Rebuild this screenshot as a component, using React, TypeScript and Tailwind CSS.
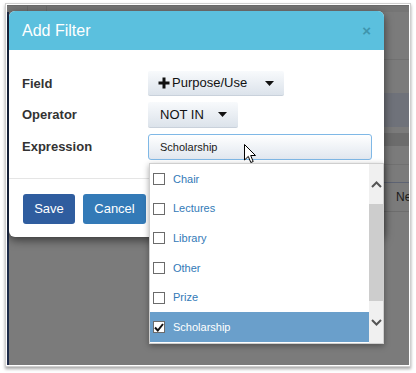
import React from "react";

const options = [
    { label: "Chair", checked: false },
    { label: "Lectures", checked: false },
    { label: "Library", checked: false },
    { label: "Other", checked: false },
    { label: "Prize", checked: false },
    { label: "Scholarship", checked: true },
];

function Caret() {
    return (
        <svg width="9" height="5" viewBox="0 0 9 5" className="shrink-0">
            <path d="M0 0 H9 L4.5 5 Z" fill="#111" />
        </svg>
    );
}

function Plus() {
    return (
        <svg width="12" height="12" viewBox="0 0 12 12" className="shrink-0 mr-[2px]">
            <path d="M6 0.5 V11.5 M0.5 6 H11.5" stroke="#111" strokeWidth="3" />
        </svg>
    );
}

function Chevron({ up }: { up?: boolean }) {
    return (
        <svg width="11" height="7" viewBox="0 0 11 7">
            <path
                d={up ? "M1 6 L5.5 1.5 L10 6" : "M1 1 L5.5 5.5 L10 1"}
                fill="none"
                stroke="#555"
                strokeWidth="2"
            />
        </svg>
    );
}

function Cursor() {
    return (
        <svg width="13" height="20" viewBox="0 0 13 20" className="absolute left-[237px] top-[139px]">
            <path
                d="M0.5 0.5 L0.5 16 L4.3 12.4 L6.8 18.5 L9.2 17.5 L6.7 11.5 L11.5 11.5 Z"
                fill="#fff"
                stroke="#000"
                strokeWidth="1"
                strokeLinejoin="round"
            />
        </svg>
    );
}

function Checkbox({ checked }: { checked: boolean }) {
    return (
        <span className="w-[12px] h-[12px] border border-[#6b6b6b] bg-white flex items-center justify-center shrink-0">
            {checked && (
                <svg width="10" height="9" viewBox="0 0 10 9">
                    <path d="M1 4.5 L3.8 7.5 L9 1" fill="none" stroke="#111" strokeWidth="2" />
                </svg>
            )}
        </span>
    );
}

export default function App() {
    return (
        <div className="w-[416px] h-[373px] bg-white pt-[3px] pl-[5px]" style={{ fontFamily: '"Liberation Sans", Arial, sans-serif' }}>
            <div className="w-[406px] h-[364px] border border-[#cfcfcf] p-[1px] shadow-[0_2px_3px_rgba(0,0,0,0.35)]">
                <div className="relative w-[402px] h-[360px] bg-[#7b7b7b] overflow-hidden">
                    {/* page behind the overlay */}
                    <div className="flex flex-col h-full">
                        <div className="h-[7px] bg-[#757575] border-t border-[#6a6a6a] flex">
                            <div className="w-[21px] border-r border-[#6a6a6a]" />
                            <div className="w-[19px] border-r border-[#6a6a6a]" />
                        </div>
                        <div className="flex-1 flex flex-col border-l-2 border-[#1d2b48]">
                            <div className="h-[48px] border-b border-[#717171]" />
                            <div className="h-[33px]" />
                            <div className="h-[34px] bg-[#6f727a]" />
                            <div className="h-[6px]" />
                            <div className="h-[13px] bg-[#6c6c6c]" />
                            <div className="h-[19px] border-b border-[#717171]" />
                            <div className="h-[18px] border-b border-[#5d6373]" />
                            <div className="h-[29px] border-b border-[#6d6d6d] flex items-center pl-[387px] text-[12px] text-[#1a1a1a] whitespace-nowrap overflow-hidden">
                                Ne
                            </div>
                            <div className="flex-1" />
                        </div>
                    </div>

                    {/* modal */}
                    <div className="absolute left-[2px] top-[6px] w-[375px] h-[226px] bg-white rounded-[6px] overflow-hidden shadow-[0_3px_10px_rgba(0,0,0,0.55)] flex flex-col">
                        <div className="h-[39px] bg-[#5bc0de] flex items-center justify-between pl-[13px] pr-[13px] shrink-0">
                            <span className="text-[16px] text-white">Add Filter</span>
                            <span className="text-[15px] font-bold text-[#3f95ad] leading-none">×</span>
                        </div>
                        <div className="flex flex-col gap-[6px] pt-[21px] pl-[13px] pb-[18px] border-b border-[#e5e5e5]">
                            <div className="flex items-center">
                                <span className="w-[126px] text-[13px] font-bold text-[#333]">Field</span>
                                <div className="h-[25px] w-[136px] flex items-center pl-[10px] pr-[10px] rounded-[2px] bg-gradient-to-b from-[#f8fafc] to-[#dce3eb] border-b border-[#c9d1db]">
                                    <Plus />
                                    <span className="text-[13px] text-[#111]">Purpose/Use</span>
                                    <span className="flex-1" />
                                    <Caret />
                                </div>
                            </div>
                            <div className="flex items-center">
                                <span className="w-[126px] text-[13px] font-bold text-[#333]">Operator</span>
                                <div className="h-[26px] w-[90px] flex items-center pl-[12px] pr-[11px] rounded-[2px] bg-gradient-to-b from-[#f8fafc] to-[#dce3eb] border-b border-[#c9d1db]">
                                    <span className="text-[13px] text-[#111]">NOT IN</span>
                                    <span className="flex-1" />
                                    <Caret />
                                </div>
                            </div>
                            <div className="flex items-center">
                                <span className="w-[126px] text-[13px] font-bold text-[#333]">Expression</span>
                                <div className="h-[26px] w-[224px] flex items-center pl-[11px] rounded-[3px] border border-[#7fb8e6] bg-gradient-to-b from-[#ffffff] to-[#e1e7ef]">
                                    <span className="text-[11px] text-[#1a1a1a]">Scholarship</span>
                                </div>
                            </div>
                        </div>
                        <div className="flex gap-[8px] pt-[15px] pl-[14px]">
                            <button className="w-[52px] h-[30px] rounded-[3px] bg-[#2f5d9f] text-white text-[13px]">Save</button>
                            <button className="w-[63px] h-[30px] rounded-[3px] bg-[#337ab7] text-white text-[13px]">Cancel</button>
                        </div>
                    </div>

                    {/* dropdown list */}
                    <div className="absolute left-[142px] top-[158px] w-[235px] h-[181px] bg-white border border-[#cfcfcf] shadow-[0_2px_6px_rgba(0,0,0,0.35)] flex">
                        <div className="flex-1 flex flex-col">
                            {options.map((o) => (
                                <div
                                    key={o.label}
                                    className={`h-[29.7px] flex items-center gap-[8px] pl-[3px] text-[11px] ${o.checked ? "bg-[#6a9fcb] text-white" : "text-[#337ab7]"}`}
                                >
                                    <Checkbox checked={o.checked} />
                                    <span>{o.label}</span>
                                </div>
                            ))}
                        </div>
                        <div className="w-[14px] bg-[#f0f0f0] flex flex-col items-center">
                            <div className="h-[40px] flex items-center justify-center">
                                <Chevron up />
                            </div>
                            <div className="w-full h-[97px] bg-[#cdcdcd]" />
                            <div className="flex-1 flex items-center justify-center">
                                <Chevron />
                            </div>
                        </div>
                    </div>

                    <Cursor />
                </div>
            </div>
        </div>
    );
}
